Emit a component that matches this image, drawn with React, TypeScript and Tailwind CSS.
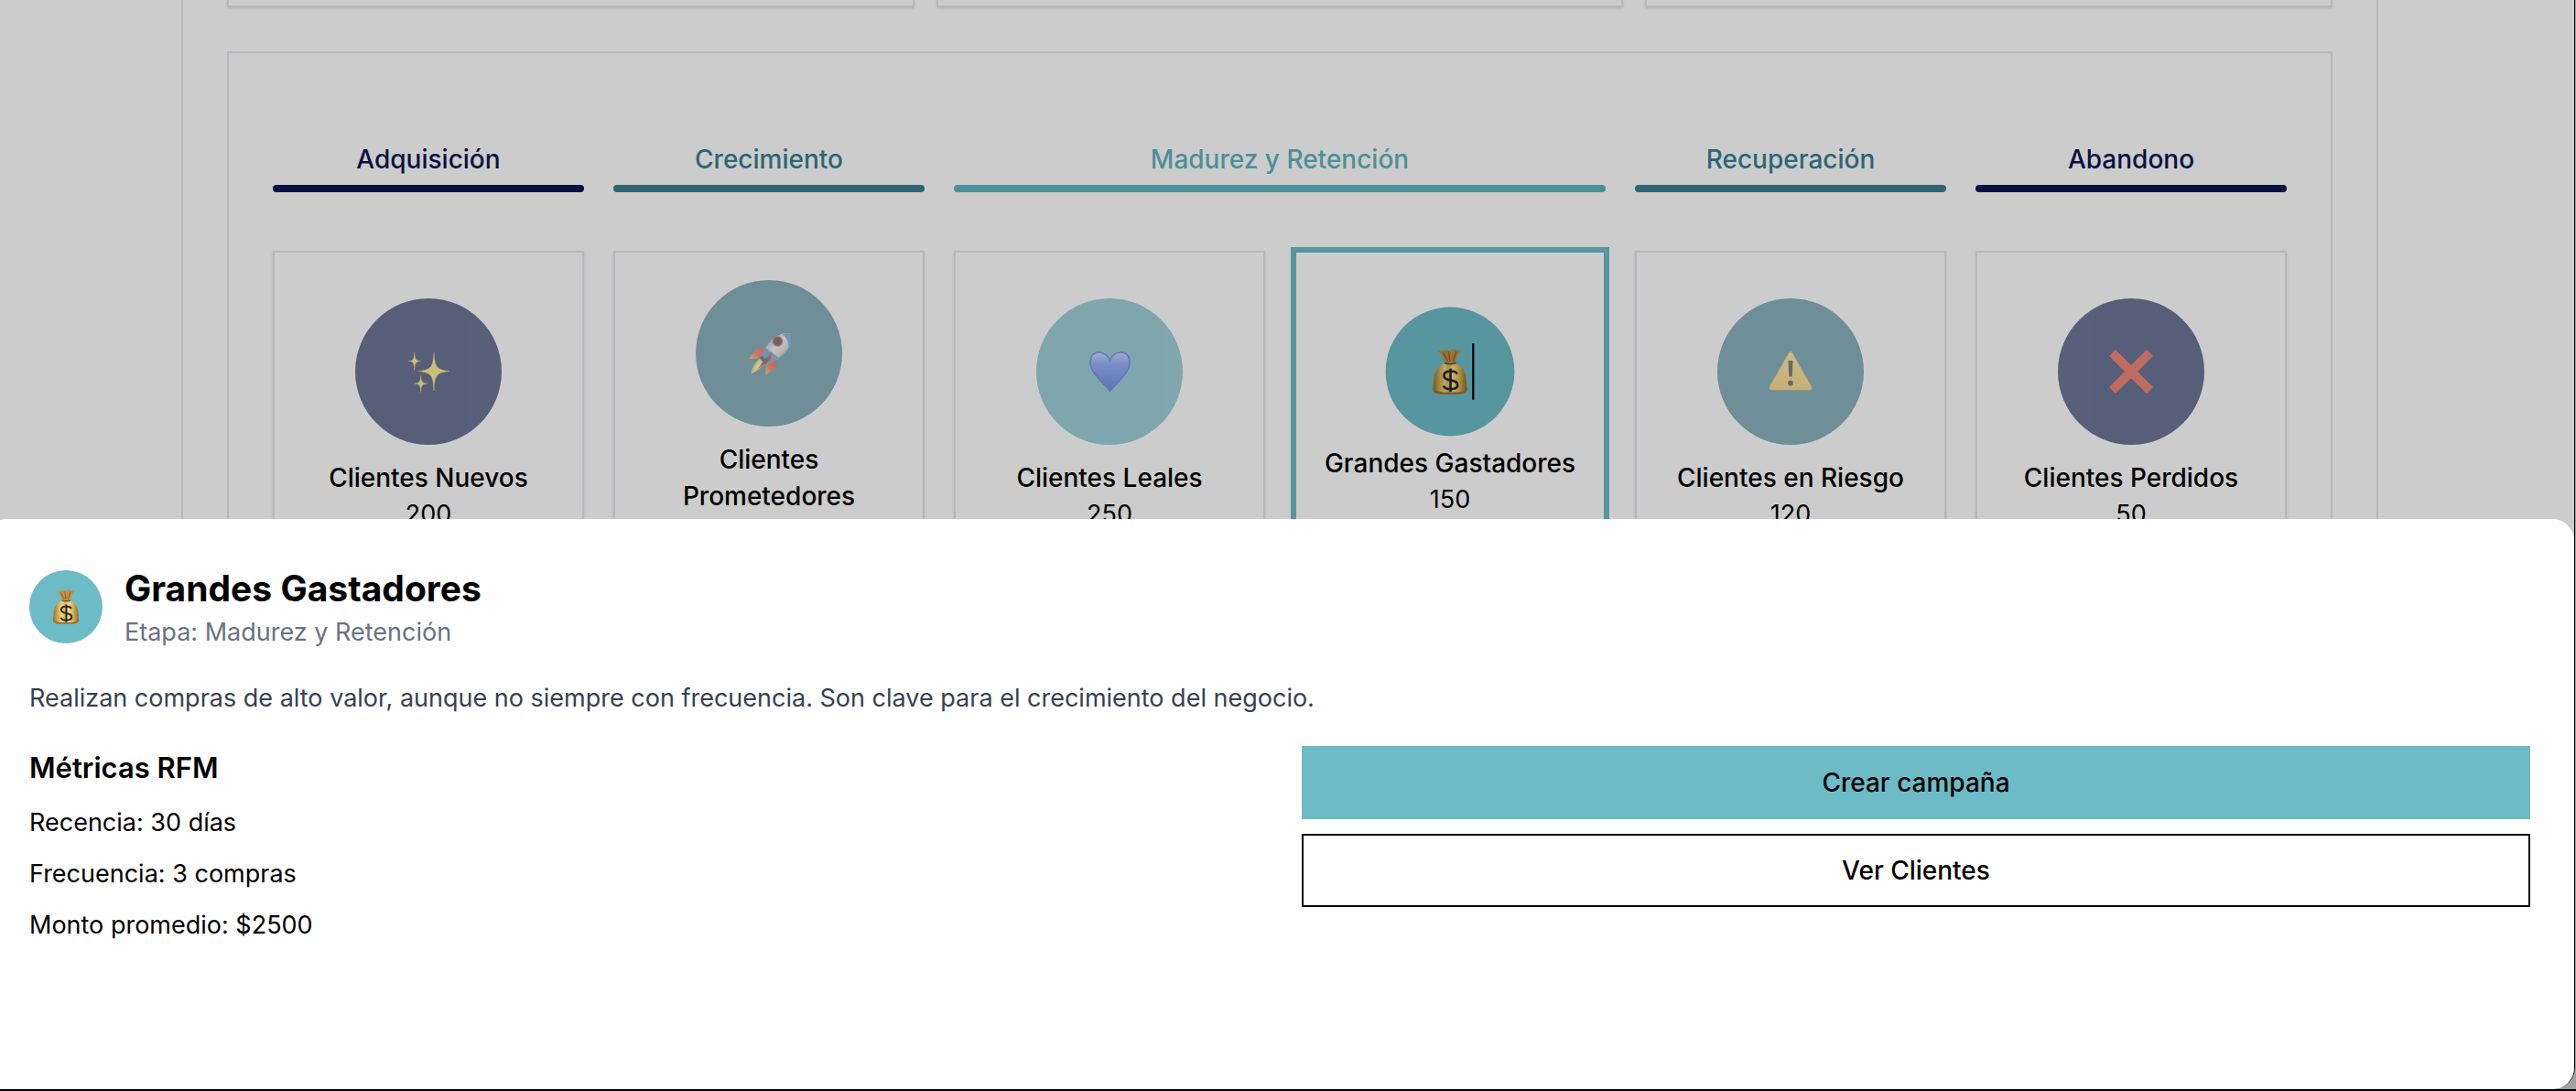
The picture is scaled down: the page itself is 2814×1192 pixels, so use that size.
import type { ReactNode } from "react";

function SparklesIcon() {
  return (
    <svg viewBox="0 0 48 48" className="size-12" aria-hidden="true">
      <g fill="#fde458" stroke="#e9a548" strokeWidth="0.5">
        <path d="M30 3 C31 18 32 22 47 23.500 C32 25 31 29 30 45 C29 29 28 25 13 23.500 C28 22 29 18 30 3Z" />
        <path d="M8.800 3 C9.300 10.500 10 12 15.300 12.500 C10 13 9.300 14.500 8.800 22.500 C8.300 14.500 7.600 13 2.500 12.500 C7.600 12 8.300 10.500 8.800 3Z" />
        <path d="M15.700 28.500 C16.200 35 17 36.500 22.700 37 C17 37.500 16.200 39 15.700 46.500 C15.200 39 14.400 37.500 8.700 37 C14.400 36.500 15.200 35 15.700 28.500Z" />
      </g>
    </svg>
  );
}

function RocketIcon() {
  return (
    <svg viewBox="0 0 48 48" className="size-12" aria-hidden="true">
      <defs>
        <linearGradient id="rocketBody" x1="0.2" y1="0.2" x2="0.8" y2="0.8">
          <stop offset="0" stopColor="#6f9fe0" />
          <stop offset="0.45" stopColor="#f0f0ee" />
          <stop offset="0.75" stopColor="#c9cccb" />
          <stop offset="1" stopColor="#5f6c78" />
        </linearGradient>
        <linearGradient id="rocketFin" x1="1" y1="0" x2="0" y2="1">
          <stop offset="0" stopColor="#d8301c" />
          <stop offset="0.6" stopColor="#f0522f" />
          <stop offset="1" stopColor="#fbb540" />
        </linearGradient>
      </defs>
      <path d="M22 16 Q20 20 17 29 L2 30 L10 19 Q15 18.500 22 16Z" fill="url(#rocketFin)" />
      <path d="M32 30 L31.500 41 L20.500 47 L20.500 36Z" fill="url(#rocketFin)" />
      <path d="M14 30 L19 35 Q15 42 4.500 46.500 Q6 36 14 30Z" fill="#fdd74e" />
      <path d="M13 33 L16 36 Q12 40 8 43Z" fill="#fff3a0" />
      <path d="M48 2.500 Q51 14 41 24 Q35 31 23 35 L16 28 Q19 16 29 7.500 Q38 0 48 2.500Z" fill="url(#rocketBody)" />
      <path d="M48 2.500 Q51 11 45.500 19 Q46 9 39 3.200 Q43 1.300 48 2.500Z" fill="#5585d0" />
      <path d="M20 18 L35 29 Q29 33 23 35 L16 28 Q17 22 20 18Z" fill="#5582c8" />
      <path d="M28 22 L25 31 L12 41 L19 31Z" fill="#a8221e" />
      <path d="M13 28 L17 27 L23 33 L20 36Z" fill="#1f3f63" />
      <circle cx="33.500" cy="11" r="5.800" fill="#e02a24" />
      <circle cx="33.500" cy="11" r="4.400" fill="#262c30" />
    </svg>
  );
}

function HeartIcon() {
  return (
    <svg viewBox="0 0 48 48" className="size-12" aria-hidden="true">
      <defs>
        <linearGradient id="heartFill" x1="0" y1="0" x2="0" y2="1">
          <stop offset="0" stopColor="#a9c4f8" />
          <stop offset="0.3" stopColor="#5084f0" />
          <stop offset="0.6" stopColor="#376bf0" />
          <stop offset="1" stopColor="#2345d8" />
        </linearGradient>
      </defs>
      <path
        d="M24.500 45.500 C19 38 3 26 3 14 C3 6.500 7 3 12.500 3 C18 3 23 7 24.500 12 C26 7 31 3 36.500 3 C42 3 46 6.500 46 14 C46 26 30 38 24.500 45.500Z"
        fill="url(#heartFill)"
        stroke="#2c50dc"
        strokeWidth="1.600"
      />
    </svg>
  );
}

function MoneyBagIcon({ id, className }: { id: string; className: string }) {
  return (
    <svg viewBox="0 0 48 48" className={className} aria-hidden="true">
      <defs>
        <linearGradient id={id} x1="0" y1="0" x2="1" y2="0">
          <stop offset="0" stopColor="#9a6f2c" />
          <stop offset="0.2" stopColor="#d0ad55" />
          <stop offset="0.35" stopColor="#ecd67c" />
          <stop offset="0.45" stopColor="#d8b85e" />
          <stop offset="0.6" stopColor="#f2df88" />
          <stop offset="0.8" stopColor="#d0ab50" />
          <stop offset="1" stopColor="#8e6426" />
        </linearGradient>
      </defs>
      <path d="M12 3 Q17 3.500 20 2.500 Q23 3.500 25 2.500 Q28 1 30 2.500 Q33 3 36 2.500 Q31 8 29.500 15 L19 15 Q17 8 12 3Z" fill="#c09048" />
      <path d="M17 5 L22 14 M22.500 4 L24 14 M30 4 L27 14" stroke="#8f6128" strokeWidth="1.200" fill="none" />
      <path
        d="M19 15.500 Q24 17 30 15.500 Q39 20 40 30 Q40 37 41 41 Q41 45.500 34 46 L14 46 Q7 45.500 7 41 Q8 37 8 30 Q9 20 19 15.500Z"
        fill={`url(#${id})`}
      />
      <path d="M7 40 Q10 44.500 18 44.500 L31 44.500 Q38 44.500 41 40 Q41.500 46 33 46.500 L15 46.500 Q6.500 46 7 40Z" fill="#9d702e" />
      <path d="M18.500 15.500 Q24 17.500 30 15.500" stroke="#7d4f1c" strokeWidth="1.800" fill="none" />
      <path
        d="M31 26.500 Q30 23.500 24.500 23.500 Q18 23.500 18 28 Q18 31.500 24.500 32.500 Q31.500 33.500 31.500 37.500 Q31.500 41.500 24.500 41.500 Q18.500 41.500 17.500 38 M24.500 21 V44"
        stroke="#2b2629"
        strokeWidth="2.400"
        fill="none"
      />
    </svg>
  );
}

function WarningIcon() {
  return (
    <svg viewBox="0 0 48 48" className="size-12" aria-hidden="true">
      <defs>
        <linearGradient id="warningFill" x1="0" y1="0" x2="0" y2="1">
          <stop offset="0" stopColor="#fbdf70" />
          <stop offset="1" stopColor="#f6c452" />
        </linearGradient>
      </defs>
      <path
        d="M22.300 3.500 Q24 1 25.700 3.500 L46.800 40.500 Q48 44 45 44 L3 44 Q0 44 1.200 40.500Z"
        fill="url(#warningFill)"
        stroke="#d9b45c"
        strokeWidth="0.800"
      />
      <path d="M21.500 12 H26.500 L25.800 29.500 H22.200Z" fill="#2f3133" />
      <circle cx="24" cy="36.500" r="2.900" fill="#2f3133" />
    </svg>
  );
}

function CrossIcon() {
  return (
    <svg viewBox="0 0 48 48" className="size-12" aria-hidden="true">
      <path d="M0 7 L7 0 L24 17 L41 0 L48 7 L31 24 L48 41 L41 48 L24 31 L7 48 L0 41 L17 24Z" fill="#e33823" />
    </svg>
  );
}

type Segment = {
  name: string;
  count: string;
  circle: string;
  icon: ReactNode;
  selected?: boolean;
};

const stages = [
  { label: "Adquisición", text: "text-[#0a1650]", bar: "bg-[#0a1650]", span: "" },
  { label: "Crecimiento", text: "text-[#3b7f93]", bar: "bg-[#3b7f93]", span: "" },
  { label: "Madurez y Retención", text: "text-[#5fb3bf]", bar: "bg-[#5fb3bf]", span: "col-span-2" },
  { label: "Recuperación", text: "text-[#3b7f93]", bar: "bg-[#3b7f93]", span: "" },
  { label: "Abandono", text: "text-[#0a1650]", bar: "bg-[#0a1650]", span: "" },
];

const segments: Segment[] = [
  { name: "Clientes Nuevos", count: "200", circle: "bg-[#0d1c50]", icon: <SparklesIcon /> },
  { name: "Clientes Prometedores", count: "300", circle: "bg-[#3d8093]", icon: <RocketIcon /> },
  { name: "Clientes Leales", count: "250", circle: "bg-[#61b2c0]", icon: <HeartIcon /> },
  {
    name: "Grandes Gastadores",
    count: "150",
    circle: "bg-[#6dbbc7]",
    icon: <MoneyBagIcon id="bagCard" className="size-12" />,
    selected: true,
  },
  { name: "Clientes en Riesgo", count: "120", circle: "bg-[#3d8093]", icon: <WarningIcon /> },
  { name: "Clientes Perdidos", count: "50", circle: "bg-[#0d1c50]", icon: <CrossIcon /> },
];

const metrics = ["Recencia: 30 días", "Frecuencia: 3 compras", "Monto promedio: $2500"];

function SegmentCard({ segment }: { segment: Segment }) {
  const { name, count, circle, icon, selected } = segment;
  return (
    <button
      type="button"
      className={`flex min-h-[360px] flex-col items-center justify-center border-2 py-[30px] ${
        selected ? "border-[#6dbbc7] px-4 ring-4 ring-[#6dbbc7]" : "border-gray-200 px-[30px] shadow-sm"
      }`}
    >
      <span
        className={`relative mb-4 flex items-center justify-center rounded-full ${circle} ${
          selected ? "size-32 scale-110" : "size-40 opacity-60"
        }`}
      >
        {icon}
        {selected && <span className="absolute left-[86px] h-14 w-0.5 bg-black" />}
      </span>
      <span className="text-[28px] leading-10 font-medium">{name}</span>
      <span>{count}</span>
    </button>
  );
}

export default function App() {
  return (
    <div className="h-screen overflow-hidden bg-black pb-0.5 font-['Inter',sans-serif] text-[27px] leading-10 text-black">
      <div className="h-full bg-neutral-400 pr-px">
        <div className="relative h-full overflow-hidden rounded-br-3xl border-r border-black bg-white">
          <div className="relative -ml-4 h-full">
            <main className="mx-auto h-full max-w-[2400px] overflow-hidden border-x-2 border-gray-200 px-12">
              <div className="grid grid-cols-3 gap-6">
                <div className="h-2 border-2 border-t-0 border-gray-200 shadow-sm" />
                <div className="h-2 border-2 border-t-0 border-gray-200 shadow-sm" />
                <div className="h-2 border-2 border-t-0 border-gray-200 shadow-sm" />
              </div>
              <section className="mt-12 border-2 border-gray-200 px-12 pt-24 pb-12">
                <div className="grid grid-cols-6 gap-x-8">
                  {stages.map((stage) => (
                    <div key={stage.label} className={`text-center ${stage.span}`}>
                      <h3 className={`mb-2 text-[28px] leading-10 font-medium ${stage.text}`}>{stage.label}</h3>
                      <div className={`h-2 rounded-full ${stage.bar}`} />
                    </div>
                  ))}
                </div>
                <div className="mt-16 grid grid-cols-6 gap-x-8">
                  {segments.map((segment) => (
                    <SegmentCard key={segment.name} segment={segment} />
                  ))}
                </div>
              </section>
            </main>

            <div className="absolute inset-0 bg-black/20" />

            <section
              role="dialog"
              aria-labelledby="segment-title"
              className="absolute inset-x-0 bottom-0 rounded-t-3xl bg-white px-12 pt-12 pb-[159px]"
            >
              <header className="flex items-center gap-6">
                <div className="flex size-20 items-center justify-center rounded-full bg-[#6dbbc7]">
                  <MoneyBagIcon id="bagHeader" className="size-10" />
                </div>
                <div>
                  <h2 id="segment-title" className="text-[39px] leading-14 font-bold">
                    Grandes Gastadores
                  </h2>
                  <p className="text-gray-500">Etapa: Madurez y Retención</p>
                </div>
              </header>
              <p className="mt-8 text-gray-700">
                Realizan compras de alto valor, aunque no siempre con frecuencia. Son clave para el crecimiento del
                negocio.
              </p>
              <div className="mt-8 grid grid-cols-2 gap-12">
                <div>
                  <h3 className="text-[31px] leading-12 font-semibold">Métricas RFM</h3>
                  <ul className="mt-4 flex flex-col gap-4">
                    {metrics.map((metric) => (
                      <li key={metric}>{metric}</li>
                    ))}
                  </ul>
                </div>
                <div className="flex flex-col gap-4">
                  <button type="button" className="h-20 bg-[#6dbbc7] text-[28px] font-medium">
                    Crear campaña
                  </button>
                  <button type="button" className="h-20 border-2 border-black bg-white text-[28px] font-medium">
                    Ver Clientes
                  </button>
                </div>
              </div>
            </section>
          </div>
        </div>
      </div>
    </div>
  );
}
